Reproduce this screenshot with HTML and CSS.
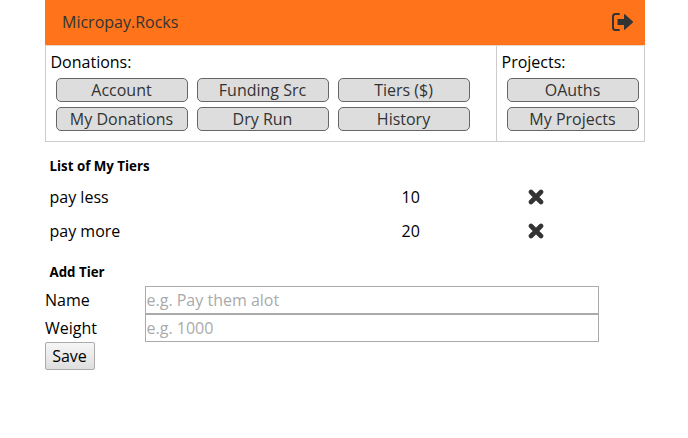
FILE: index.html
```html
<!DOCTYPE html>
<html lang="en">
<head>
<meta charset="utf-8">
<title>Micropay.Rocks</title>
<link rel="stylesheet" href="styles.css">
</head>
<body>
<div class="page">
  <header class="topbar">
    <span class="brand">Micropay.Rocks</span>
    <svg class="logout" width="23" height="20" viewBox="0 0 23 20" aria-hidden="true">
      <path d="M8 2H4.5A2.5 2.5 0 0 0 2 4.5v11A2.5 2.5 0 0 0 4.5 18H8" fill="none" stroke="#333" stroke-width="2" stroke-linecap="round"/>
      <path d="M6.5 7H13V2.7a.5.5 0 0 1 .85-.35l8 7.2a.6.6 0 0 1 0 .9l-8 7.2a.5.5 0 0 1-.85-.35V13H6.5Z" fill="#333"/>
    </svg>
  </header>
  <nav class="menu">
    <section class="group group-main">
      <div class="group-title">Donations:</div>
      <div class="buttons buttons-three">
        <a class="btn">Account</a>
        <a class="btn">Funding Src</a>
        <a class="btn">Tiers ($)</a>
        <a class="btn">My Donations</a>
        <a class="btn">Dry Run</a>
        <a class="btn">History</a>
      </div>
    </section>
    <section class="group group-side">
      <div class="group-title">Projects:</div>
      <div class="buttons">
        <a class="btn">OAuths</a>
        <a class="btn">My Projects</a>
      </div>
    </section>
  </nav>
  <h2 class="heading heading-list">List of My Tiers</h2>
  <div class="tier">
    <span class="tier-name">pay less</span>
    <span class="tier-weight">10</span>
    <svg class="remove" width="16" height="16" viewBox="0 0 16 16" aria-hidden="true"><path d="M3 3 13 13M13 3 3 13" stroke="#333" stroke-width="4.6" stroke-linecap="round"/></svg>
  </div>
  <div class="tier">
    <span class="tier-name">pay more</span>
    <span class="tier-weight">20</span>
    <svg class="remove" width="16" height="16" viewBox="0 0 16 16" aria-hidden="true"><path d="M3 3 13 13M13 3 3 13" stroke="#333" stroke-width="4.6" stroke-linecap="round"/></svg>
  </div>
  <h2 class="heading heading-add">Add Tier</h2>
  <form class="form">
    <div class="field">
      <label class="field-label">Name</label>
      <input class="field-input" type="text" placeholder="e.g. Pay them alot">
    </div>
    <div class="field">
      <label class="field-label">Weight</label>
      <input class="field-input" type="text" placeholder="e.g. 1000">
    </div>
    <button class="save" type="button">Save</button>
  </form>
</div>
</body>
</html>
```
FILE: styles.css
```css
html, body { margin: 0; padding: 0; background: #fff; }
body { font-family: "Open Sans", sans-serif; font-size: 16px; color: #000; }
.page { width: 600px; margin-left: 45px; }
.topbar { height: 46px; box-sizing: border-box; background: #ff741a; border-bottom: 1px solid #e8d8c8; display: flex; align-items: center; justify-content: space-between; padding: 0 11px 2px 17px; color: #333; }
.brand { line-height: 22px; }
.logout { display: block; }
.menu { display: flex; height: 96px; box-sizing: border-box; border: 1px solid #ccc; border-top: 0; }
.group { box-sizing: border-box; padding: 5px 0 0 4.5px; }
.group-main { width: 451px; border-right: 1px solid #ccc; }
.group-side { flex: 1; }
.group-title { line-height: 22px; height: 22px; margin-bottom: 5px; }
.buttons { display: grid; grid-template-columns: 132px; gap: 5px 9px; padding-left: 5.5px; }
.buttons-three { grid-template-columns: repeat(3, 132px); }
.btn { box-sizing: border-box; height: 24px; line-height: 22px; text-align: center; background: #ddd; border: 1px solid #666; border-radius: 5px; color: #333; padding-right: 1px; }
.heading { margin: 0; font-size: 13.3px; font-weight: 700; line-height: 18px; padding-left: 4.5px; }
.heading-list { margin-top: 15px; margin-bottom: 5px; }
.heading-add { margin-top: 15px; margin-bottom: 5px; }
.tier { display: flex; align-items: center; height: 34px; padding-left: 4.5px; }
.tier-name { width: 352px; }
.tier-weight { width: 127px; }
.remove { display: block; margin-left: -1px; }
.form { display: flex; flex-direction: column; align-items: flex-start; }
.field { display: flex; align-items: center; height: 28px; }
.field-label { width: 100px; }
.field-input { box-sizing: border-box; width: 454px; height: 28px; margin: 0; padding: 0 0 0 0.5px; border: 1px solid #aaa; font: inherit; color: #333; outline: 0; }
.field-input::placeholder { color: #aaa; opacity: 1; }
.save { box-sizing: border-box; height: 28px; width: 50px; margin: 0; padding: 0 1px 0 0; font: inherit; color: #000; background: linear-gradient(#f6f6f6, #dedede); border: 1px solid #aaa; border-radius: 2px; }
```
